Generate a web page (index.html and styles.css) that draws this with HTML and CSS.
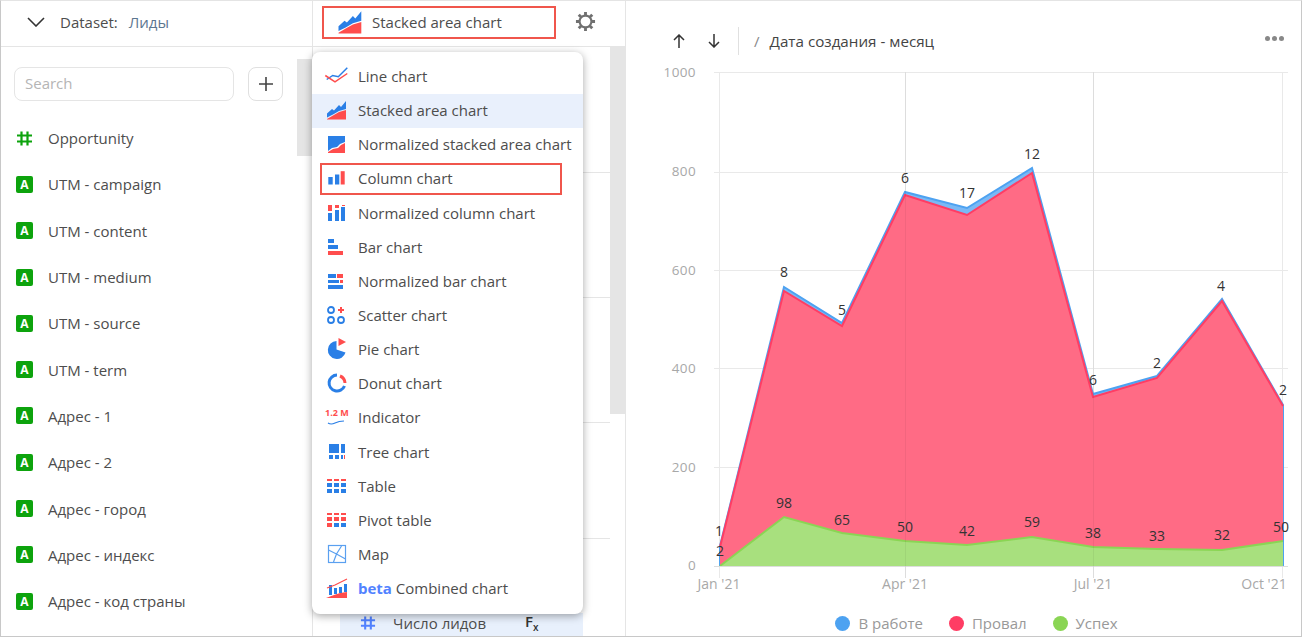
FILE: index.html
```html
<!DOCTYPE html>
<html lang="ru">
<head>
    <meta charset="UTF-8">
    <title>Stacked area chart</title>
    <link rel="stylesheet" href="styles.css">
</head>
<body>
<svg class="defs" width="0" height="0">
    <symbol id="i-stacked" viewBox="0 0 24 20">
        <path fill="#2a7fe6" d="M2 13.5 7 9l2 1.500L14 5l2 2 5-6v8l-7 2-6 3.500-6 3z"/>
        <path fill="#ff4d4d" d="M2 19l6-3.500 6-3.500 7-2v9.500H2z"/>
    </symbol>
</svg>
<div class="frame">
    <!-- левая колонка: датасет -->
    <div class="col-fields">
        <div class="head head-dataset">
            <svg class="chevron" width="18" height="10" viewBox="0 0 18 10"><path d="M1 1l8 8 8-8" fill="none" stroke="#333" stroke-width="1.600"/></svg>
            <span class="dataset-label">Dataset:</span>
            <span class="dataset-name">Лиды</span>
        </div>
        <div class="thumb"></div>
        <div class="search-row">
            <div class="search">Search</div>
            <div class="plus">
                <svg width="14" height="14" viewBox="0 0 14 14"><path d="M7 0v14M0 7h14" stroke="#444" stroke-width="1.600"/></svg>
            </div>
        </div>
        <ul class="fields">
            <li><svg class="type" viewBox="0 0 17 17"><path d="M5.500 1.500v14M11.500 1.500v14M1 5.500h15M1 11.500h15" stroke="#0da30d" stroke-width="2.200"/></svg>Opportunity</li>
            <li><span class="type type-a">A</span>UTM - campaign</li>
            <li><span class="type type-a">A</span>UTM - content</li>
            <li><span class="type type-a">A</span>UTM - medium</li>
            <li><span class="type type-a">A</span>UTM - source</li>
            <li><span class="type type-a">A</span>UTM - term</li>
            <li><span class="type type-a">A</span>Адрес - 1</li>
            <li><span class="type type-a">A</span>Адрес - 2</li>
            <li><span class="type type-a">A</span>Адрес - город</li>
            <li><span class="type type-a">A</span>Адрес - индекс</li>
            <li><span class="type type-a">A</span>Адрес - код страны</li>
        </ul>
    </div>

    <!-- средняя колонка: настройки чарта -->
    <div class="col-wizard">
        <div class="head head-wizard">
            <div class="chart-select">
                <svg class="select-icon"><use href="#i-stacked"/></svg>
                <span>Stacked area chart</span>
            </div>
            <svg class="gear" width="21" height="21" viewBox="0 0 22 22">
                <circle cx="11" cy="11" r="6.200" fill="none" stroke="#707070" stroke-width="2.200"/>
                <path d="M11 1v3.500M11 17.500V21M1 11h3.500M17.500 11H21M3.900 3.900l2.500 2.500M15.600 15.600l2.500 2.500M3.900 18.100l2.500-2.500M15.600 6.400l2.500-2.500" stroke="#707070" stroke-width="3"/>
            </svg>
        </div>
        <div class="wizard-body">
            <div class="sections">
                <div class="section s1"></div>
                <div class="section s2"></div>
                <div class="section s3"></div>
                <div class="section s4"></div>
                <div class="metric">
                    <svg class="metric-icon" viewBox="0 0 17 17"><path d="M5.500 1.500v14M11.500 1.500v14M1 5.500h15M1 11.500h15" stroke="#5282ff" stroke-width="2.200"/></svg>
                    <span class="metric-name">Число лидов</span>
                    <span class="metric-fx">F<sub>x</sub></span>
                </div>
            </div>
            <div class="wizard-scroll"></div>
        </div>

        <ul class="menu">
            <li><svg class="icon" viewBox="0 0 24 20"><path d="M1.700 13.500L7.700 9.500 13.300 10.800 22.300 1.800" fill="none" stroke="#2a7fe6" stroke-width="1.500"/><path d="M.3 9.500L10 15.800 22.300 7.500" fill="none" stroke="#ff4d4d" stroke-width="1.500"/></svg>Line chart</li>
            <li class="active"><svg class="icon"><use href="#i-stacked"/></svg>Stacked area chart</li>
            <li><svg class="icon" viewBox="0 0 24 20"><path fill="#2a7fe6" d="M3 2h17v6l-5 2-3 3-5 1-4 3z"/><path fill="#ff4d4d" d="M3 18l5-3 5-1 3-3 4-2v10H3z"/></svg>Normalized stacked area chart</li>
            <li class="marked"><svg class="icon" viewBox="0 0 24 20"><rect x="3.300" y="9" width="4.400" height="7.500" fill="#2a7fe6"/><rect x="10" y="6.500" width="4.300" height="10" fill="#2a7fe6"/><rect x="15.700" y="3.200" width="4" height="13.300" fill="#ff4d4d"/></svg>Column chart</li>
            <li><svg class="icon" viewBox="0 0 24 20"><path fill="#ff4d4d" d="M3 2h4v6H3zM10 2h4v3h-4zM17 2h3v1h-3z"/><path fill="#2a7fe6" d="M3 10h4v8H3zM10 7h4v11h-4zM16 4h4v14h-4z"/></svg>Normalized column chart</li>
            <li><svg class="icon" viewBox="0 0 24 20"><path fill="#2a7fe6" d="M3 2h6v4H3zM3 8h10v4H3z"/><path fill="#ff4d4d" d="M3 14h15v4H3z"/></svg>Bar chart</li>
            <li><svg class="icon" viewBox="0 0 24 20"><path fill="#2a7fe6" d="M3 3h8v4H3zM3 9h11v3H3zM3 14h15v4H3z"/><path fill="#ff4d4d" d="M12 3h6v4h-6zM15 9h3v3h-3z"/></svg>Normalized bar chart</li>
            <li><svg class="icon" viewBox="0 0 24 20"><g fill="none" stroke="#2a7fe6" stroke-width="1.800"><circle cx="6" cy="5" r="3"/><circle cx="6" cy="15" r="3"/><circle cx="16" cy="15" r="3"/></g><path d="M16 2v6M13 5h6" stroke="#ff4d4d" stroke-width="2"/></svg>Scatter chart</li>
            <li><svg class="icon" viewBox="0 0 24 20"><path fill="#2a7fe6" d="M11.500 2A9 9 0 1 0 20.500 13.500L11.500 10.500z"/><path fill="#ff4d4d" d="M13.500-1L21 3l-7.500 4z"/></svg>Pie chart</li>
            <li><svg class="icon" viewBox="0 0 24 20"><path d="M12 2a8 8 0 1 0 7.500 11" fill="none" stroke="#2a7fe6" stroke-width="3"/><path d="M15 3a8 8 0 0 1 5 7" fill="none" stroke="#ff4d4d" stroke-width="3"/></svg>Donut chart</li>
            <li><svg class="icon" viewBox="0 0 24 20"><text x="0" y="9" class="icon-num">1.2 M</text><path d="M3 16q3 2 7 0t9-2" fill="none" stroke="#2a7fe6" stroke-width="1.200"/></svg>Indicator</li>
            <li><svg class="icon" viewBox="0 0 24 20"><path fill="#2a7fe6" d="M4 2h10v9H4zM16 2h4v9h-4zM4 13h4v4H4zM10 13h4v4h-4zM16 13h2v4h-2z"/><path fill="#ff4d4d" d="M19 13h1v4h-1z"/></svg>Tree chart</li>
            <li><svg class="icon" viewBox="0 0 24 20"><path fill="#ff4d4d" d="M2 3h5v2H2zM9 3h5v2H9zM16 3h5v2h-5z"/><path fill="#2a7fe6" d="M2 7h5v4H2zM9 7h5v4H9zM16 7h5v4h-5zM2 13h5v4H2zM9 13h5v4H9zM16 13h5v4h-5z"/></svg>Table</li>
            <li><svg class="icon" viewBox="0 0 24 20"><path fill="#ff4d4d" d="M2 3h5v2H2zM9 3h5v2H9zM16 3h5v2h-5zM2 7h5v4H2zM9 7h5v4H9zM16 7h5v4h-5z"/><path fill="#ff4d4d" d="M2 13h5v4H2z"/><path fill="#2a7fe6" d="M9 13h5v4H9zM16 13h5v4h-5z"/></svg>Pivot table</li>
            <li><svg class="icon" viewBox="0 0 24 20"><rect x="3.500" y="1.500" width="17" height="17" fill="none" stroke="#5aa0f0" stroke-width="1.200"/><path d="M3.500 6l8 4 5-8M11.500 10l-3 8M11.500 10l9 5" fill="none" stroke="#5aa0f0" stroke-width="1.200"/></svg>Map</li>
            <li><svg class="icon" viewBox="0 0 24 20"><path fill="#ff4d4d" d="M1 20l8-3 6-2 7-1v6z"/><path fill="#2a7fe6" d="M4 7h3v10H4zM9 10h3v6H9zM14 9h3v6h-3zM19 6h3v8h-3z"/><path d="M2 10l8-3 12-6" fill="none" stroke="#ff4d4d" stroke-width="1.200"/></svg><b class="beta">beta</b>&nbsp;Combined chart</li>
        </ul>
    </div>

    <!-- правая колонка: сам чарт -->
    <div class="col-chart">
        <div class="chart-head">
            <svg class="arrow" width="12" height="14" viewBox="0 0 12 14"><path d="M6 14V1M1 6l5-5 5 5" fill="none" stroke="#333" stroke-width="1.500"/></svg>
            <svg class="arrow" width="12" height="14" viewBox="0 0 12 14"><path d="M6 0v13M1 8l5 5 5-5" fill="none" stroke="#333" stroke-width="1.500"/></svg>
            <span class="head-sep"></span>
            <span class="crumb-slash">/</span>
            <span class="crumb">Дата создания - месяц</span>
            <span class="dots"><i></i><i></i><i></i></span>
        </div>
        <svg class="plot" width="676" height="530" viewBox="626 62 676 530">
            <g class="grid">
                <path d="M714 72.500H1288M714 172.500H1288M714 270.500H1288M714 368.500H1288M714 467.500H1288"/>
                <path d="M719.500 72V578M905.500 72V578M1093.500 72V578M1282.500 72V578"/>
            </g>
            <path d="M720 546L784 287 842 323 905 192 967 208 1032 168 1093 394 1157 376 1222 299 1283 405V566H720z" fill="#4da2f1" fill-opacity=".75" stroke="#4da2f1" stroke-width="2"/>
            <path d="M720 547L784 291 842 326 905 195 967 215 1032 173 1093 397 1157 378 1222 301 1283 406V566H720z" fill="#ff6b85"/>
            <path d="M720 547L784 291 842 326 905 195 967 215 1032 173 1093 397 1157 378 1222 301 1283 406" fill="none" stroke="#ff3d64" stroke-width="2"/>
            <path d="M720 566L784 517 842 533 905 541 967 545 1032 537 1093 547 1157 549 1222 550 1283 541V566z" fill="#a8e07e"/>
            <path d="M720 566L784 517 842 533 905 541 967 545 1032 537 1093 547 1157 549 1222 550 1283 541" fill="none" stroke="#8ad554" stroke-width="2"/>
            <path d="M714 566.500H1288" stroke="#ddd"/>
            <path d="M905.500 72V578M1093.500 72V578" stroke="#000" stroke-opacity=".05"/>
            <g class="y-labels">
                <text x="696" y="77">1000</text>
                <text x="696" y="176">800</text>
                <text x="696" y="275">600</text>
                <text x="696" y="373">400</text>
                <text x="696" y="472">200</text>
                <text x="696" y="570">0</text>
            </g>
            <g class="x-labels">
                <text x="719" y="589">Jan '21</text>
                <text x="905" y="589">Apr '21</text>
                <text x="1093" y="589">Jul '21</text>
                <text x="1264" y="589">Oct '21</text>
            </g>
            <g class="values">
                <text x="784" y="277">8</text>
                <text x="842" y="315">5</text>
                <text x="905" y="183">6</text>
                <text x="967" y="198">17</text>
                <text x="1032" y="159">12</text>
                <text x="1093" y="385">6</text>
                <text x="1157" y="368">2</text>
                <text x="1221" y="291">4</text>
                <text x="1283" y="395">2</text>
                <text x="719" y="536">1</text>
                <text x="720" y="556">2</text>
                <text x="784" y="508">98</text>
                <text x="842" y="525">65</text>
                <text x="905" y="532">50</text>
                <text x="967" y="536">42</text>
                <text x="1032" y="527">59</text>
                <text x="1093" y="538">38</text>
                <text x="1157" y="541">33</text>
                <text x="1222" y="540">32</text>
                <text x="1281" y="532">50</text>
            </g>
        </svg>
        <div class="legend">
            <span class="legend-item"><i class="dot dot-blue"></i>В работе</span>
            <span class="legend-item"><i class="dot dot-red"></i>Провал</span>
            <span class="legend-item"><i class="dot dot-green"></i>Успех</span>
        </div>
    </div>
</div>
</body>
</html>
```

FILE: styles.css
```css
*, *::after {
    box-sizing: border-box;
}
body {
    margin: 0;
    background-color: #ffffff;
    font-family: "Open Sans", "Noto Sans", sans-serif;
    font-size: 15px;
    color: #4d4d4d;
}
ul {
    list-style: none;
    margin: 0;
    padding: 0;
}
.defs {
    position: absolute;
}
.frame {
    display: flex;
    width: 1302px;
    height: 637px;
    overflow: hidden;
    border: 1px solid #c8c8c8;
    border-top-color: #e4e4e4;
}

/* шапки колонок */
.head {
    display: flex;
    align-items: center;
    height: 46px;
    border-bottom: 1px solid #e5e5e5;
}

/* левая колонка */
.col-fields {
    position: relative;
    width: 312px;
    flex: none;
    border-right: 1px solid #e5e5e5;
}
.head-dataset {
    padding: 0 0 3px 26px;
}
.chevron {
    margin-right: 15px;
}
.dataset-label {
    margin-right: 11px;
}
.dataset-name {
    color: #5c7690;
}
.thumb {
    position: absolute;
    top: 58px;
    right: 0;
    width: 15px;
    height: 97px;
    background-color: #e5e5e5;
}
.search-row {
    display: flex;
    gap: 14px;
    padding: 20px 0 0 13px;
}
.search {
    width: 220px;
    height: 34px;
    padding-left: 10px;
    border: 1px solid #e5e5e5;
    border-radius: 8px;
    line-height: 30px;
    color: #b5b5b5;
}
.plus {
    display: flex;
    align-items: center;
    justify-content: center;
    width: 35px;
    height: 34px;
    border: 1px solid #e0e0e0;
    border-radius: 8px;
}
.fields {
    padding-top: 14px;
}
.fields li {
    display: flex;
    align-items: center;
    gap: 15px;
    height: 46.3px;
    padding-left: 15px;
}
.type {
    width: 17px;
    height: 17px;
    flex: none;
}
.type-a {
    border-radius: 2px;
    background-color: #0da30d;
    font-size: 12px;
    font-weight: 700;
    line-height: 17px;
    text-align: center;
    color: #ffffff;
}

/* средняя колонка */
.col-wizard {
    position: relative;
    width: 313px;
    flex: none;
    border-right: 1px solid #e5e5e5;
}
.head-wizard {
    padding: 0 0 2px 9px;
}
.chart-select {
    display: flex;
    align-items: center;
    gap: 7px;
    width: 234px;
    height: 33px;
    padding: 0 0 2px 12px;
    border: 2.5px solid #f0564c;
}
.select-icon {
    width: 29px;
    height: 24px;
}
.gear {
    margin: -2px 0 0 19px;
}
.wizard-body {
    display: flex;
}
.sections {
    width: 297px;
}
.section {
    border-bottom: 1px solid #e5e5e5;
}
.s1 {
    height: 126px;
}
.s2 {
    height: 125px;
}
.s3 {
    height: 125px;
}
.s4 {
    height: 116px;
}
.metric {
    display: flex;
    align-items: center;
    width: 243px;
    height: 24px;
    margin: 74px 0 0 27px;
    padding: 0 0 5px 20px;
    background-color: #e8f0fc;
}
.metric-icon {
    width: 16px;
    height: 16px;
}
.metric-name {
    margin-left: 17px;
}
.metric-fx {
    margin-left: 39px;
    font-weight: 600;
    color: #333;
}
.metric-fx sub {
    font-size: 10px;
}
.wizard-scroll {
    width: 15px;
    height: 367px;
    background-color: #e5e5e5;
}

/* выпадающее меню типов чарта */
.menu {
    position: absolute;
    top: 51px;
    left: -1px;
    width: 271px;
    height: 562px;
    padding-top: 8px;
    background-color: #ffffff;
    border-radius: 8px;
    box-shadow: 0 2px 8px rgba(0, 0, 0, 0.35);
}
.menu li {
    position: relative;
    display: flex;
    align-items: center;
    height: 34.15px;
    padding: 0 0 2px 13px;
}
.menu .active {
    background-color: #e9f0fc;
}
.menu .marked::after {
    content: "";
    position: absolute;
    top: 1px;
    left: 8px;
    width: 242px;
    height: 32px;
    border: 2.5px solid #f0564c;
}
.icon {
    width: 24px;
    height: 20px;
    margin-right: 9px;
    flex: none;
    overflow: visible;
}
.icon-num {
    font-size: 9px;
    font-weight: 700;
    fill: #ff4d4d;
}
.beta {
    color: #5282ff;
}

/* правая колонка */
.col-chart {
    flex: 1;
    min-width: 0;
}
.chart-head {
    display: flex;
    align-items: center;
    height: 61px;
    padding: 19px 17px 0 47px;
}
.arrow {
    margin-right: 23px;
}
.head-sep {
    width: 1px;
    height: 28px;
    margin-left: -5px;
    background-color: #e0e0e0;
}
.crumb-slash {
    margin-left: 15px;
    color: #888;
}
.crumb {
    margin-left: 10px;
    font-size: 15.2px;
    color: #444;
}
.dots {
    display: flex;
    gap: 2px;
    margin: -6px 0 0 auto;
}
.dots i {
    width: 5px;
    height: 5px;
    border-radius: 50%;
    background-color: #888;
}
.plot {
    display: block;
}
.grid path {
    fill: none;
    stroke: #e9e9e9;
}
.y-labels text {
    font-size: 13.5px;
    letter-spacing: 0.4px;
    fill: #a8a8a8;
    text-anchor: end;
}
.x-labels text {
    font-size: 14px;
    fill: #a8a8a8;
    text-anchor: middle;
}
.values text {
    font-size: 14px;
    fill: #333;
    text-anchor: middle;
}
.legend {
    display: flex;
    justify-content: center;
    gap: 26px;
    padding: 21px 0 0 26px;
    color: #999;
}
.legend-item {
    display: flex;
    align-items: center;
    gap: 8px;
}
.dot {
    width: 15px;
    height: 15px;
    border-radius: 50%;
}
.dot-blue {
    background-color: #4da2f1;
}
.dot-red {
    background-color: #ff3d64;
}
.dot-green {
    background-color: #8ad554;
}
```
